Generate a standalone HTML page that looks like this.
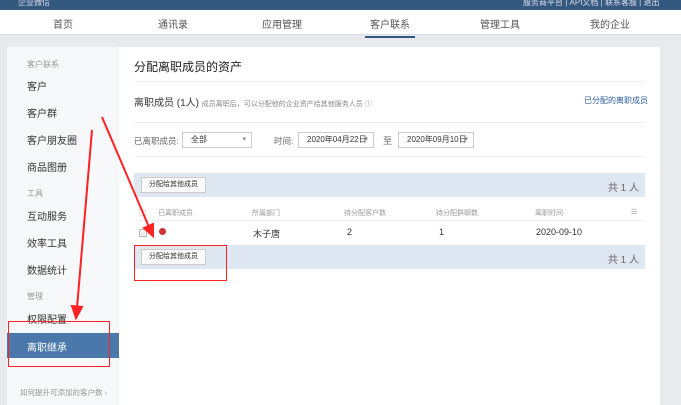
<!DOCTYPE html><html><head><meta charset="utf-8"><style>
*{margin:0;padding:0;box-sizing:border-box}
body{width:681px;height:405px;overflow:hidden;background:#e9eaed;font-family:"Liberation Sans","Noto Sans CJK SC",sans-serif;position:relative;color:#333}
.top{position:absolute;left:0;top:0;width:681px;height:10px;background:#34597f}
.top span{position:absolute;top:-3px;font-size:8px;color:#dde}
.nav{position:absolute;left:0;top:10px;width:681px;height:25px;background:#fff;border-bottom:1px solid #dde}
.nav div{position:absolute;top:6px;font-size:10px;color:#555}
.nav .act{border-bottom:2px solid #34597f;padding:0 5px 5px}
.side{position:absolute;left:7px;top:47px;width:112px;height:358px;background:#f7f8fa}
.side div{position:absolute;left:20px;font-size:10px;color:#333}
.side .g{font-size:8px;color:#999}
.main{position:absolute;left:119px;top:47px;width:541px;height:358px;background:#fff}
.a{position:absolute;white-space:nowrap}
.hr{position:absolute;left:15px;width:511px;height:1px;background:#eee}
.bar{position:absolute;left:15px;width:511px;height:24px;background:#dfe7f2}
.btn{position:absolute;left:7px;top:4px;height:16px;border:1px solid #ccc;background:#fafafa;font-size:7px;line-height:14px;padding:0 7px;color:#333}
.sel{position:absolute;height:16px;border:1px solid #ccc;font-size:8px;line-height:14px;padding-left:8px;color:#333}
.sel:after{content:"▾";position:absolute;right:5px;font-size:7px;color:#888}
.redbox{position:absolute;border:1.5px solid #f22}
</style></head><body>
<div class="top"><span style="left:18px">企业微信</span><span style="left:523px">服务商平台 | API文档 | 联系客服 | 退出</span></div>
<div class="nav">
<div style="left:53px">首页</div><div style="left:158px">通讯录</div><div style="left:262px">应用管理</div>
<div class="act" style="left:365px">客户联系</div><div style="left:480px">管理工具</div><div style="left:590px">我的企业</div></div>
<div class="side">
<div class="g" style="top:12px">客户联系</div><div style="top:31px">客户</div><div style="top:58px">客户群</div><div style="top:85px">客户朋友圈</div><div style="top:112px">商品图册</div>
<div class="g" style="top:141px">工具</div><div style="top:161px">互动服务</div><div style="top:188px">效率工具</div><div style="top:215px">数据统计</div>
<div class="g" style="top:244px">管理</div><div style="top:264px">权限配置</div>
<div style="left:0;top:286px;width:112px;height:25px;background:#4a78aa;color:#fff;padding:6px 0 0 20px">离职继承</div>
<div class="g" style="left:13px;top:340px;font-size:7.5px">如何提升可添加的客户数 ›</div></div>
<div class="main">
<div class="a" style="left:15px;top:11px;font-size:12px;color:#222">分配离职成员的资产</div>
<div class="hr" style="top:34px"></div>
<div class="a" style="left:15px;top:47px;font-size:10px">离职成员 (1人) <span style="font-size:7px;color:#888">成员离职后，可以分配他的企业资产给其他服务人员 ⓘ</span></div>
<div class="a" style="left:465px;top:48px;font-size:8px;color:#2a5c9a">已分配的离职成员</div>
<div class="hr" style="top:75px"></div>
<div class="a" style="left:15px;top:88px;font-size:8.5px;color:#666">已离职成员:</div>
<div class="sel" style="left:63px;top:85px;width:70px">全部</div>
<div class="a" style="left:155px;top:88px;font-size:8.5px;color:#666">时间:</div>
<div class="sel" style="left:179px;top:85px;width:76px">2020年04月22日</div>
<div class="a" style="left:264px;top:87px;font-size:9px;color:#666">至</div>
<div class="sel" style="left:279px;top:85px;width:76px">2020年09月10日</div>
<div class="hr" style="top:109px"></div>
<div class="bar" style="top:126px"><div class="btn">分配给其他成员</div><div class="a" style="right:6px;top:6px;font-size:10px;color:#666">共 1 人</div></div>
<div class="a" style="left:15px;top:157px;width:511px;height:17px;border-bottom:1px solid #eee;font-size:7px;color:#999">
<span class="a" style="left:5px;top:4px">▢</span><span class="a" style="left:24px;top:4px">已离职成员</span><span class="a" style="left:118px;top:4px">所属部门</span><span class="a" style="left:210px;top:4px">待分配客户数</span><span class="a" style="left:302px;top:4px">待分配群聊数</span><span class="a" style="left:401px;top:4px">离职时间</span><span class="a" style="left:497px;top:4px">☰</span></div>
<div class="a" style="left:20px;top:182px;width:8px;height:8px;border:1px solid #bbb;background:#eee"></div>
<div class="a" style="left:40px;top:181px;width:7px;height:7px;border-radius:50%;background:#c33"></div>
<div class="a" style="left:134px;top:180px;font-size:9px">木子唐</div>
<div class="a" style="left:228px;top:180px;font-size:9px">2</div>
<div class="a" style="left:320px;top:180px;font-size:9px">1</div>
<div class="a" style="left:417px;top:180px;font-size:9px">2020-09-10</div>
<div class="bar" style="top:198px"><div class="btn">分配给其他成员</div><div class="a" style="right:6px;top:6px;font-size:10px;color:#666">共 1 人</div></div>
</div>
<div class="redbox" style="left:134px;top:245px;width:93px;height:36px"></div>
<div class="redbox" style="left:8px;top:321px;width:102px;height:46px"></div>
<svg class="a" style="left:0;top:0" width="681" height="405"><g stroke="#f22" stroke-width="2" fill="#f22">
<line x1="92" y1="130" x2="77" y2="308"/><polygon points="72,306 82,307 76,318"/>
<line x1="102" y1="117" x2="149" y2="227"/><polygon points="144,228 153,224 153,236"/></g></svg>
</body></html>
